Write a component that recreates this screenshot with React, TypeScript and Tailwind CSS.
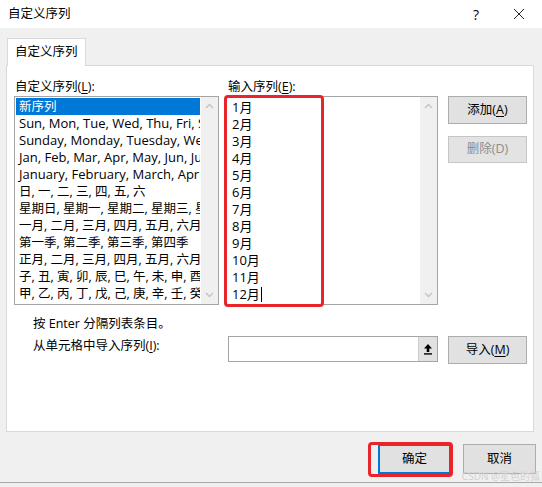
import React from "react";

const leftItems = [
  "新序列",
  "Sun, Mon, Tue, Wed, Thu, Fri, Sat",
  "Sunday, Monday, Tuesday, Wednesday, Thursday, Friday, Saturday",
  "Jan, Feb, Mar, Apr, May, Jun, Jul, Aug, Sep, Oct, Nov, Dec",
  "January, February, March, April, May, June, July, August, September, October, November, December",
  "日, 一, 二, 三, 四, 五, 六",
  "星期日, 星期一, 星期二, 星期三, 星期四, 星期五, 星期六",
  "一月, 二月, 三月, 四月, 五月, 六月, 七月, 八月, 九月, 十月, 十一月, 十二月",
  "第一季, 第二季, 第三季, 第四季",
  "正月, 二月, 三月, 四月, 五月, 六月, 七月, 八月, 九月, 十月, 十一月, 腊月",
  "子, 丑, 寅, 卯, 辰, 巳, 午, 未, 申, 酉, 戌, 亥",
  "甲, 乙, 丙, 丁, 戊, 己, 庚, 辛, 壬, 癸",
];

const months = ["1月", "2月", "3月", "4月", "5月", "6月", "7月", "8月", "9月", "10月", "11月", "12月"];

function Chevron({ up }: { up?: boolean }) {
  return (
    <svg width="9" height="6" viewBox="0 0 9 6" className="block">
      <polyline
        points={up ? "1,5 4.5,1.5 8,5" : "1,1 4.5,4.5 8,1"}
        fill="none"
        stroke="#c4c4c4"
        strokeWidth="1.4"
      />
    </svg>
  );
}

function ScrollBar() {
  return (
    <div className="w-[17px] h-full bg-[#f0f0f0] flex flex-col items-center justify-between py-[6px]">
      <Chevron up />
      <Chevron />
    </div>
  );
}

function Btn({ children, disabled }: { children: React.ReactNode; disabled?: boolean }) {
  return (
    <div
      className={
        disabled
          ? "w-[79px] h-[27px] bg-[#e3e3e3] border border-[#c6c6c6] flex items-center justify-center text-[#8c8c8c]"
          : "w-[79px] h-[28px] bg-[#e1e1e1] border border-[#adadad] flex items-center justify-center text-black"
      }
    >
      {children}
    </div>
  );
}

export default function App() {
  return (
    <div
      className="w-[542px] h-[487px] bg-[#f0f0f0] flex flex-col text-[12.5px] text-black overflow-hidden"
      style={{ fontFamily: '"Open Sans", "Noto Sans CJK SC", sans-serif' }}
    >
      {/* title bar */}
      <div className="h-[28px] bg-white flex items-center shrink-0">
        <div className="pl-[8px] flex-1">自定义序列</div>
        <div className="w-[20px] text-center text-[14px] mr-[27px]">?</div>
        <svg width="12" height="12" viewBox="0 0 12 12" className="mr-[17px]">
          <path d="M1 1 L11 11 M11 1 L1 11" stroke="#222" strokeWidth="1" />
        </svg>
      </div>

      {/* tabs */}
      <div className="pt-[10px] pl-[7px] shrink-0">
        <div className="relative z-10 w-[79px] h-[28px] bg-white border border-[#d9d9d9] border-b-0 flex items-center pl-[7px] -mb-px">
          自定义序列
        </div>
      </div>

      {/* panel */}
      <div className="ml-[6px] w-[528px] h-[367px] bg-white border border-[#d9d9d9] shrink-0 pl-[7px] pt-[12px] flex flex-col">
        <div className="flex">
          {/* left column */}
          <div className="w-[205px]">
            <div className="h-[18px] leading-[17px] pl-[1px]">
              自定义序列(<u className="underline-offset-2">L</u>):
            </div>
            <div className="h-[209px] border border-[#a5a5a5] flex">
              <div className="flex-1 min-w-0 overflow-hidden p-[1px]">
                {leftItems.map((t, i) => (
                  <div
                    key={i}
                    className={
                      "h-[17px] leading-[17px] whitespace-nowrap overflow-hidden pl-[3px] " +
                      (i >= 1 && i <= 4 ? "text-[13px] " : "") +
                      (i === 0 ? "bg-[#0078d7] text-white" : "")
                    }
                  >
                    {t}
                  </div>
                ))}
              </div>
              <ScrollBar />
            </div>
          </div>

          {/* right column */}
          <div className="w-[212px] ml-[7px]">
            <div className="h-[18px] leading-[17px] pl-[2px]">
              输入序列(<u className="underline-offset-2">E</u>):
            </div>
            <div className="relative h-[209px] border border-[#a5a5a5] flex">
              <div className="flex-1 pt-[2px] pl-[5px]">
                {months.map((m, i) => (
                  <div key={i} className="h-[17px] leading-[17px] text-[13px]">
                    {m}
                    {i === 11 && <span className="inline-block w-px h-[15px] bg-black ml-[1px] align-[-3px]" />}
                  </div>
                ))}
              </div>
              <ScrollBar />
              <div className="absolute left-[-3px] top-[-2px] w-[100px] h-[212px] border-[3px] border-[#e8252b] rounded-[4px]" />
            </div>
          </div>

          {/* buttons */}
          <div className="ml-[10px] pt-[18px] flex flex-col gap-[12px]">
            <Btn>
              添加(<u className="underline-offset-2">A</u>)
            </Btn>
            <Btn disabled>删除(D)</Btn>
          </div>
        </div>

        <div className="mt-[10px] h-[17px] leading-[17px] pl-[19px]">按 Enter 分隔列表条目。</div>

        <div className="mt-[4px] flex items-start">
          <div className="w-[212px] pl-[19px] leading-[17px] pt-[1px]">
            从单元格中导入序列(<u className="underline-offset-2">I</u>):
          </div>
          <div className="ml-[2px] w-[210px] h-[26px] border border-[#a5a5a5] flex justify-end">
            <div className="w-[19px] h-full bg-[#e1e1e1] border-l border-[#cfcfcf] flex items-center justify-center">
              <svg width="10" height="12" viewBox="0 0 10 12">
                <path d="M5 1 L9 5.5 L6.3 5.5 L6.3 9 L3.7 9 L3.7 5.5 L1 5.5 Z" fill="#000" />
                <rect x="1" y="10.2" width="8" height="1.4" fill="#000" />
              </svg>
            </div>
          </div>
          <div className="ml-[10px]">
            <Btn>
              导入(<u className="underline-offset-2">M</u>)
            </Btn>
          </div>
        </div>
      </div>

      {/* bottom buttons */}
      <div className="flex justify-end pr-[6px] pt-[12px] gap-[12px] h-[51px] border-b border-[#a8a8a8] shrink-0 relative">
        <div className="relative">
          <div className="w-[73px] h-[30px] bg-[#e1e1e1] border-2 border-[#0078d7] flex items-center justify-center">
            确定
          </div>
          <div className="absolute left-[-10px] top-[-2px] w-[85px] h-[35px] border-[3px] border-[#e8252b] rounded-[4px]" />
        </div>
        <div className="w-[73px] h-[30px] bg-[#e1e1e1] border border-[#adadad] flex items-center justify-center">
          取消
        </div>
        <div className="absolute right-[2px] bottom-[1px] text-[10px] text-[#d0d0d0] leading-none">CSDN @星色的狐</div>
      </div>
    </div>
  );
}
